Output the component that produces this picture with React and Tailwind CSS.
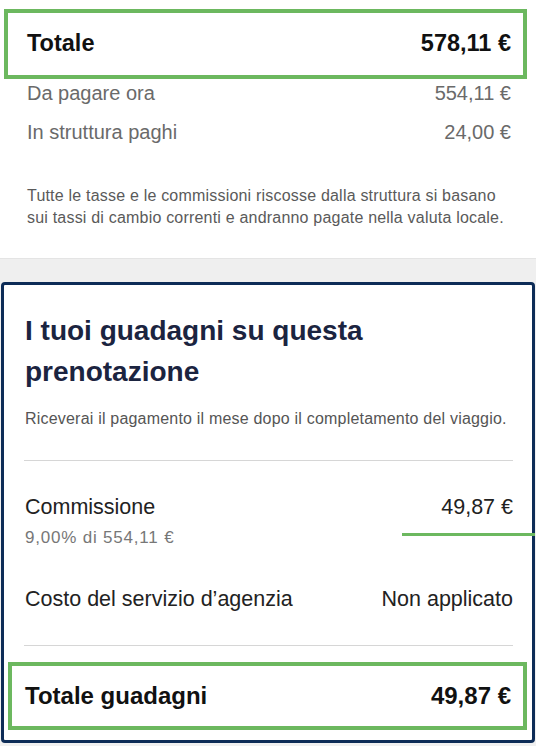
export default function App() {
  const font = "font-['Liberation_Sans','Helvetica','Arial',sans-serif]"

  return (
    <div className={`relative w-[536px] h-[746px] overflow-hidden bg-[#f0f0f0] ${font}`}>
      {/* riepilogo prezzo */}
      <section className="bg-white pt-[9px] pb-[29px]">
        <div className="ml-[4px] w-[523px] h-[70px] border-4 border-[#6cb85f] flex items-center justify-between pl-[19px] pr-[12px]">
          <span className="text-[23.5px] font-bold text-[#111]">Totale</span>
          <span className="text-[23.5px] font-bold text-[#111]">578,11 €</span>
        </div>
        <div className="flex flex-col gap-[11px] pl-[27px] pr-[25px] text-[20px] text-[#6a6a6a]">
          <div className="h-[28px] flex items-center justify-between">
            <span>Da pagare ora</span>
            <span>554,11 €</span>
          </div>
          <div className="h-[28px] flex items-center justify-between">
            <span>In struttura paghi</span>
            <span>24,00 €</span>
          </div>
        </div>
        <p className="mt-[39px] pl-[27px] pr-[30px] text-[16px] tracking-[0.2px] leading-[22px] text-[#5a5a5a]">
          Tutte le tasse e le commissioni riscosse dalla struttura si basano sui tassi di cambio correnti e andranno pagate nella valuta locale.
        </p>
      </section>

      <div className="h-[24px] border-t border-[#e4e4e4] bg-[#efefef]" />

      {/* guadagni */}
      <section className="relative ml-[1px] w-[534px] border-[3px] border-[#0d2c57] rounded-[4px] bg-white pt-[25px] pb-[10px]">
        <h2 className="pl-[21px] text-[28px] leading-[41px] font-bold text-[#1b2440]">
          I tuoi guadagni su questa<br />prenotazione
        </h2>
        <p className="mt-[17px] pl-[21px] text-[16px] tracking-[0.2px] leading-[20px] text-[#555]">
          Riceverai il pagamento il mese dopo il completamento del viaggio.
        </p>
        <div className="mt-[31px] ml-[20px] mr-[19px] h-px bg-[#d6d6d6]" />

        <div className="mt-[33px] pl-[21px] pr-[19px]">
          <div className="h-[26px] flex items-center justify-between text-[21.5px] text-[#222]">
            <span>Commissione</span>
            <span>49,87 €</span>
          </div>
          <div className="mt-[7px] h-[22px] flex items-center text-[17px] tracking-[0.8px] text-[#777]">
            9,00% di 554,11 €
          </div>
          <div className="mt-[37px] h-[26px] flex items-center justify-between text-[21.5px] text-[#222]">
            <span>Costo del servizio d’agenzia</span>
            <span>Non applicato</span>
          </div>
        </div>
        <div className="absolute left-[398px] top-[248px] w-[133px] h-[3px] bg-[#6cb85f]" />

        <div className="mt-[33px] ml-[20px] mr-[19px] h-px bg-[#d6d6d6]" />

        <div className="mt-[16px] ml-[4px] w-[519px] h-[68px] border-4 border-[#6cb85f] flex items-center justify-between pl-[13px] pr-[12px]">
          <span className="text-[24px] font-bold text-[#111]">Totale guadagni</span>
          <span className="text-[24px] font-bold text-[#111]">49,87 €</span>
        </div>
      </section>
    </div>
  )
}
